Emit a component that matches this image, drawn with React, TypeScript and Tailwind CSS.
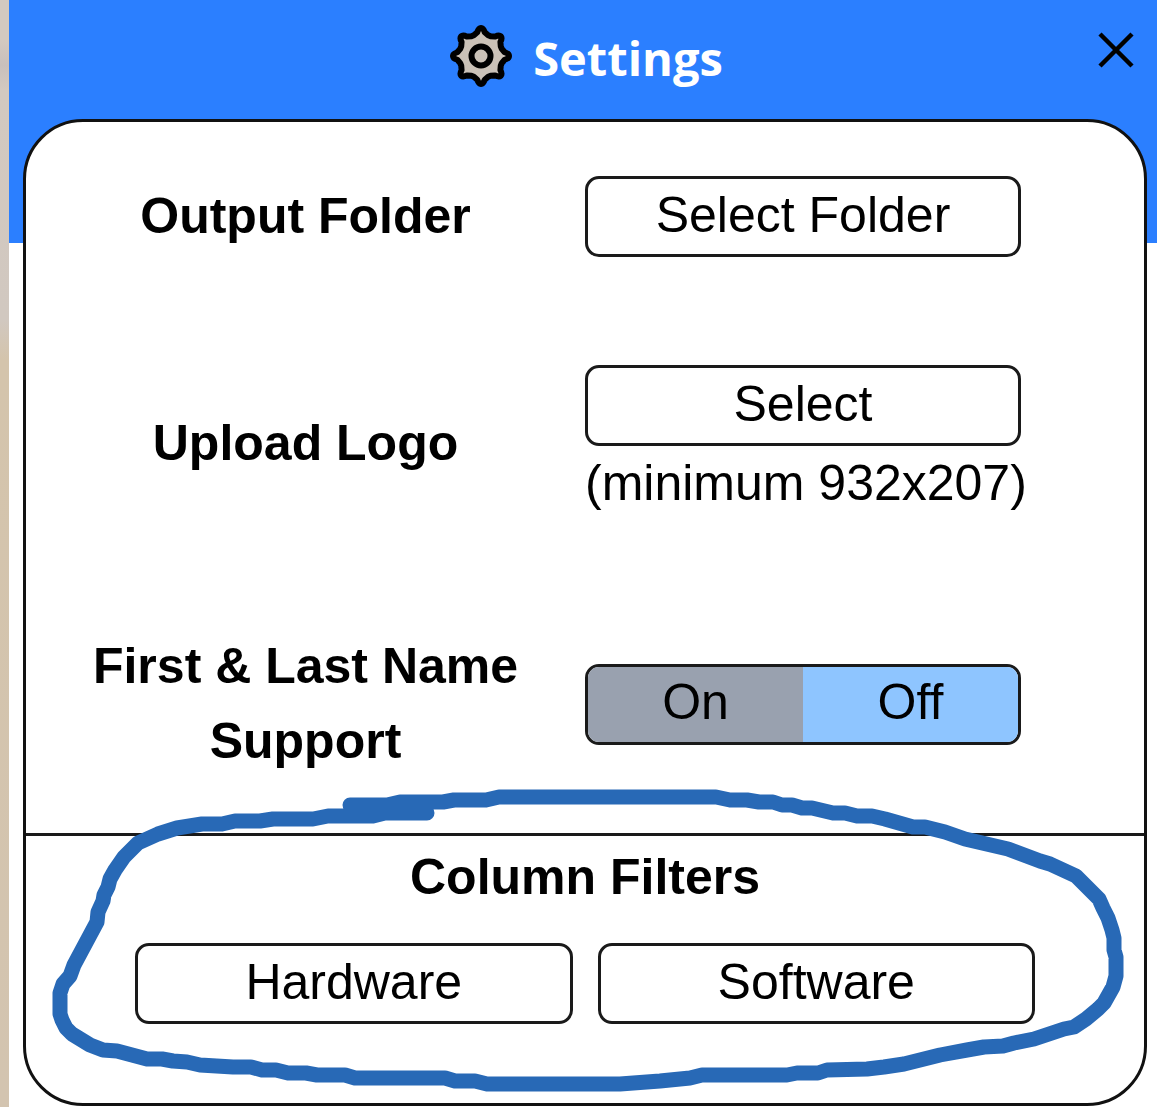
import { useState } from "react";
import type { ReactNode } from "react";

const polar = (angle: number, radius: number) => {
  const a = ((angle - 90) * Math.PI) / 180;
  return `${(32 + radius * Math.cos(a)).toFixed(2)} ${(32 + radius * Math.sin(a)).toFixed(2)}`;
};

const gearPath =
  Array.from({ length: 8 }, (_, i) => {
    const a = i * 45;
    return `${i === 0 ? "M" : "L"}${polar(a - 19, 22)} L${polar(a - 9, 24)} Q${polar(a - 5, 28)} ${polar(a, 28)} Q${polar(a + 5, 28)} ${polar(a + 9, 24)} L${polar(a + 19, 22)}`;
  }).join(" ") + " Z";

function GearIcon() {
  return (
    <svg viewBox="0 0 64 64" className="size-16" aria-hidden="true">
      <path d={gearPath} fill="#cbc2b8" stroke="#000" strokeWidth="6" strokeLinejoin="round" />
      <circle cx="32" cy="32" r="9.5" fill="#cbc2b8" stroke="#000" strokeWidth="6" />
    </svg>
  );
}

function CloseIcon() {
  return (
    <svg viewBox="0 0 40 40" className="size-10" aria-hidden="true">
      <path d="M4 4L36 36M36 4L4 36" stroke="#000" strokeWidth="4.5" />
    </svg>
  );
}

const markerPoints =
  "350,805 387,805 400,802 443,802 454,800 486,800 499,797 716,797 730,800 747,800 759,802 773,802 782,805 792,805 802,808 812,808 833,813 845,813 857,816 872,816 885,819 913,827 925,827 945,832 965,839 1008,849 1040,861 1050,864 1076,876 1099,899 1103,908 1108,918 1112,930 1114,938 1114,950 1116,957 1116,976 1113,987 1104,1003 1098,1009 1086,1019 1074,1027 1064,1029 1034,1039 1014,1043 1003,1046 984,1047 967,1050 940,1055 924,1059 904,1064 884,1067 867,1069 827,1070 818,1073 797,1073 787,1075 702,1075 690,1078 660,1081 620,1084 487,1084 475,1081 455,1081 445,1078 355,1078 345,1075 317,1075 306,1073 288,1073 276,1070 262,1070 251,1067 233,1067 200,1065 187,1062 173,1061 162,1059 147,1059 117,1051 103,1050 90,1045 72,1034 66,1028 62,1020 60,1014 60,993 63,984 70,976 74,965 97,922 98,912 103,901 104,895 108,887 110,879 115,870 124,857 138,843 158,834 177,828 202,824 222,824 235,821 260,821 273,819 313,819 328,816 373,816 385,813 427,813";

function MarkerCircle() {
  return (
    <svg
      viewBox="0 0 1157 1107"
      preserveAspectRatio="none"
      className="pointer-events-none absolute inset-0 h-full w-full"
      aria-hidden="true"
    >
      <polyline
        points={markerPoints}
        fill="none"
        stroke="#2869b6"
        strokeWidth="15"
        strokeLinecap="round"
        strokeLinejoin="round"
      />
    </svg>
  );
}

function OutlineButton({ children }: { children: ReactNode }) {
  return (
    <button
      type="button"
      className="h-[81px] w-full rounded-[14px] border-3 border-[#1a1a1a] bg-white pb-1 text-[50px] leading-none"
    >
      {children}
    </button>
  );
}

function Row({ label, children }: { label: string; children: ReactNode }) {
  return (
    <div className="grid grid-cols-2 items-center py-[54px]">
      <h2 className="px-12 text-center font-bold">{label}</h2>
      <div className="w-[78%] whitespace-nowrap">{children}</div>
    </div>
  );
}

export default function App() {
  const [support, setSupport] = useState(false);
  return (
    <div className="relative flex min-h-screen bg-white font-['Liberation_Sans',Arial,sans-serif] text-[50px] leading-[75px] text-black">
      <div className="w-[9px] shrink-0 bg-[linear-gradient(#d3c9c0_0px,#d3c9c0_40px,#c9c0bc_65px,#d3c9c0_90px,#d1c8c0_320px,#d4c4ac_360px,#d3c4b0_100%)]" />
      <main className="min-w-0 flex-1 bg-[linear-gradient(#2b7fff_243px,#ffffff_243px)] pr-[10px] pl-[14px]">
        <header className="grid h-[119px] grid-cols-[1fr_auto_1fr] items-start">
          <div className="col-start-2 flex items-start gap-5 pt-6 pl-[2px]">
            <GearIcon />
            <h1 className="font-['Open_Sans',sans-serif] text-[47px] leading-[68px] font-bold text-white">
              Settings
            </h1>
          </div>
          <button type="button" aria-label="Close" className="mt-[30px] mr-[11px] justify-self-end">
            <CloseIcon />
          </button>
        </header>

        <section className="rounded-[60px] border-3 border-[#111111] bg-white">
          <Row label="Output Folder">
            <OutlineButton>Select Folder</OutlineButton>
          </Row>
          <Row label="Upload Logo">
            <div className="flex flex-col">
              <OutlineButton>Select</OutlineButton>
              <p>(minimum 932x207)</p>
            </div>
          </Row>
          <Row label="First & Last Name Support">
            <div className="grid h-[81px] grid-cols-2 overflow-hidden rounded-[14px] border-3 border-[#1a1a1a] leading-none">
              <button
                type="button"
                aria-pressed={support}
                onClick={() => setSupport(true)}
                className="bg-[#99a1af] pb-1"
              >
                On
              </button>
              <button
                type="button"
                aria-pressed={!support}
                onClick={() => setSupport(false)}
                className="bg-[#8ec5ff] pb-1"
              >
                Off
              </button>
            </div>
          </Row>
          <div className="border-t-3 border-[#1a1a1a] px-[109px] pb-[79px]">
            <h2 className="pt-1 pb-7 text-center font-bold">Column Filters</h2>
            <div className="flex gap-[25px]">
              <OutlineButton>Hardware</OutlineButton>
              <OutlineButton>Software</OutlineButton>
            </div>
          </div>
        </section>
      </main>
      <MarkerCircle />
    </div>
  );
}
